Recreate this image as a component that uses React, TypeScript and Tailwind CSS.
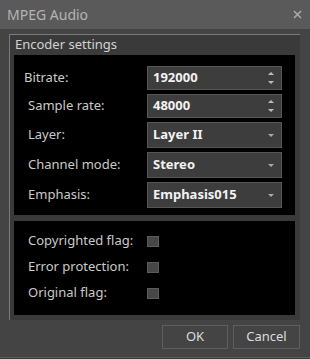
import React from "react";

const font = { fontFamily: '"Noto Sans", "Open Sans", sans-serif' };

function SpinField({ value }: { value: string }) {
  return (
    <div className="flex h-[24px] w-[135px] items-center justify-between border border-[#565656] bg-[#3d3d3d] pl-[5px] pr-[7px]">
      <span className="text-[13px] font-bold text-[#f2f2f2]">{value}</span>
      <div className="flex flex-col gap-[6px]">
        <svg width="6" height="3" viewBox="0 0 6 3">
          <path d="M3 0 L6 3 L0 3 Z" fill="#bdbdbd" />
        </svg>
        <svg width="6" height="3" viewBox="0 0 6 3">
          <path d="M0 0 L6 0 L3 3 Z" fill="#bdbdbd" />
        </svg>
      </div>
    </div>
  );
}

function ComboField({ value }: { value: string }) {
  return (
    <div className="flex h-[26px] w-[135px] items-center justify-between border border-[#565656] bg-[#3d3d3d] pl-[5px] pr-[7px]">
      <span className="text-[13px] font-bold text-[#f2f2f2]">{value}</span>
      <svg width="6" height="3" viewBox="0 0 6 3">
        <path d="M0 0 L6 0 L3 3 Z" fill="#a8a8a8" />
      </svg>
    </div>
  );
}

function Row({
  label,
  indent,
  children,
}: {
  label: string;
  indent: string;
  children: React.ReactNode;
}) {
  return (
    <div className="flex items-center">
      <span className={`w-[133px] text-[13px] text-[#cacaca] ${indent}`}>{label}</span>
      {children}
    </div>
  );
}

function CheckRow({ label }: { label: string }) {
  return (
    <div className="flex h-[26px] items-center">
      <span className="w-[133px] pl-[14px] text-[13px] text-[#cacaca]">{label}</span>
      <div className="h-[11px] w-[12px] border border-[#5c5c5c] bg-[#474747]" />
    </div>
  );
}

export default function App() {
  return (
    <div
      className="flex h-[359px] w-[310px] flex-col overflow-hidden bg-[#444444]"
      style={font}
    >
      {/* title bar */}
      <div className="flex h-[29px] shrink-0 items-center justify-between bg-[#5a5a5a] pl-[7px] pr-[8px]">
        <span className="text-[14px] text-[#b4b4b4]">MPEG Audio</span>
        <svg width="9" height="9" viewBox="0 0 9 9">
          <path d="M1 1 L8 8 M8 1 L1 8" stroke="#a9a9a9" strokeWidth="1.6" />
        </svg>
      </div>

      {/* group box */}
      <div className="ml-[9px] mt-[5px] flex h-[286px] w-[291px] flex-col border-l border-t border-[#7a7a7a] bg-[#3a3a3a] pl-[4px] pr-[5px]">
        <div className="flex h-[20px] items-center pl-[1px] text-[13px] text-[#d2d2d2]">
          Encoder settings
        </div>
        <div className="flex h-[160px] flex-col gap-[4px] bg-black pt-[11px]">
          <Row label="Bitrate:" indent="pl-[10px]">
            <SpinField value="192000" />
          </Row>
          <Row label="Sample rate:" indent="pl-[14px]">
            <SpinField value="48000" />
          </Row>
          <Row label="Layer:" indent="pl-[14px]">
            <ComboField value="Layer II" />
          </Row>
          <Row label="Channel mode:" indent="pl-[14px]">
            <ComboField value="Stereo" />
          </Row>
          <Row label="Emphasis:" indent="pl-[14px]">
            <ComboField value="Emphasis015" />
          </Row>
        </div>
        <div className="mt-[6px] flex h-[94px] flex-col bg-black pt-[7px]">
          <CheckRow label="Copyrighted flag:" />
          <CheckRow label="Error protection:" />
          <CheckRow label="Original flag:" />
        </div>
      </div>

      {/* buttons */}
      <div className="mt-[5px] flex justify-end gap-[5px] pr-[10px]">
        <button className="h-[24px] w-[66px] border border-[#5e5e5e] bg-[#444444] text-[13px] text-[#dcdcdc]">
          OK
        </button>
        <button className="h-[24px] w-[67px] border border-[#5e5e5e] bg-[#444444] text-[13px] text-[#dcdcdc]">
          Cancel
        </button>
      </div>
      <div className="mt-auto h-[2px] border-t border-[#5a5a5a] bg-[#3a3a3a]" />
    </div>
  );
}
